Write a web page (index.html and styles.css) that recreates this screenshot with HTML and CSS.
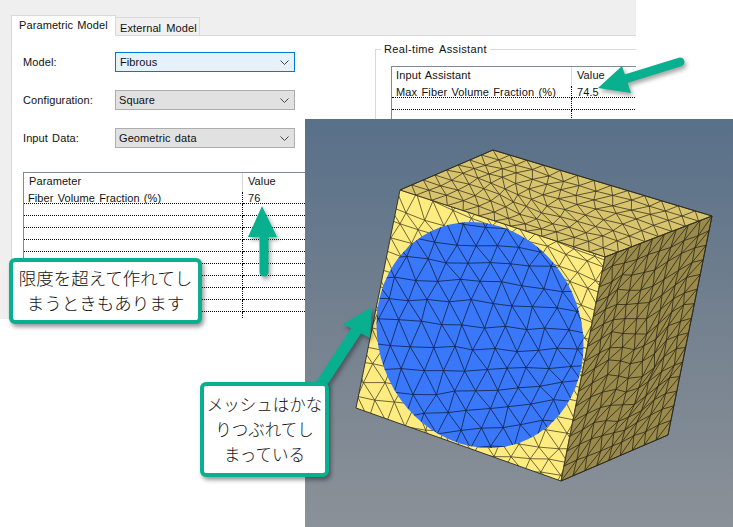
FILE: index.html
```html
<!DOCTYPE html>
<html lang="ja">
<head>
<meta charset="utf-8">
<title>Parametric Model</title>
<link rel="stylesheet" href="styles.css">
</head>
<body>
<main class="stage">
  <section class="dialog">
    <nav class="tabs">
      <div class="tab tab-active">Parametric Model</div>
      <div class="tab">External Model</div>
    </nav>
    <div class="panel">
      <div class="col-left">
        <div class="form-row">
          <span class="label">Model:</span>
          <div class="select select-focus"><span>Fibrous</span><svg class="chev" viewBox="0 0 9 5"><path d="M.5.5 4.5 4.5 8.500.5"/></svg></div>
        </div>
        <div class="form-row">
          <span class="label">Configuration:</span>
          <div class="select"><span>Square</span><svg class="chev" viewBox="0 0 9 5"><path d="M.5.5 4.5 4.5 8.500.5"/></svg></div>
        </div>
        <div class="form-row">
          <span class="label">Input Data:</span>
          <div class="select"><span>Geometric data</span><svg class="chev" viewBox="0 0 9 5"><path d="M.5.5 4.5 4.5 8.500.5"/></svg></div>
        </div>
        <table class="grid grid-param">
          <tr class="head"><th class="c1">Parameter</th><th class="c2">Value</th></tr>
          <tr><td class="c1">Fiber Volume Fraction (%)</td><td class="c2">76</td></tr>
          <tr><td></td><td></td></tr>
          <tr><td></td><td></td></tr>
          <tr><td></td><td></td></tr>
          <tr><td></td><td></td></tr>
          <tr><td></td><td></td></tr>
          <tr><td></td><td></td></tr>
          <tr><td></td><td></td></tr>
          <tr><td></td><td></td></tr>
          <tr><td></td><td></td></tr>
          <tr class="tail"><td></td><td></td></tr>
        </table>
      </div>
      <div class="col-right">
        <fieldset class="group">
          <legend>Real-time Assistant</legend>
          <table class="grid grid-assist">
            <tr class="head"><th class="c1">Input Assistant</th><th class="c2">Value</th></tr>
            <tr><td class="c1">Max Fiber Volume Fraction (%)</td><td class="c2">74.5</td></tr>
            <tr><td></td><td></td></tr>
            <tr><td></td><td></td></tr>
          </table>
        </fieldset>
      </div>
    </div>
  </section>

  <div class="viewer">
    <svg id="mesh" class="mesh" viewBox="305 119 428 408" xmlns="http://www.w3.org/2000/svg"></svg>
  </div>

  <svg class="arrows" viewBox="0 0 733 527" xmlns="http://www.w3.org/2000/svg">
    <g class="arrow">
      <path class="shaft" d="M680 62 625 79"/>
      <path class="head" d="M598 88 622 66 631 93Z"/>
    </g>
    <g class="arrow">
      <path class="shaft" d="M264 235V272"/>
      <path class="head" d="M262 206 248 237H277Z"/>
    </g>
    <g class="arrow">
      <path class="shaft-wide" d="M358 328 320 386"/>
      <path class="head" d="M372 307 343 324 370 338Z"/>
    </g>
  </svg>

  <div class="callout callout-limit">限度を超えて作れてし<br>まうときもあります</div>
  <div class="callout callout-mesh">メッシュはかな<br>りつぶれてし<br>まっている</div>
</main>
<script src="mesh.js"></script>
</body>
</html>
```
FILE: styles.css
```css
* { box-sizing: border-box; }
html, body { margin: 0; padding: 0; background: #fff; }
body { font-family: "Liberation Sans", "Noto Sans CJK JP", sans-serif; font-size: 11px; color: #111; word-spacing: 1px; letter-spacing: .1px; }

.stage { position: relative; width: 733px; height: 527px; overflow: hidden; background: #fff; }

.dialog { width: 636px; height: 319px; background: #efefef; padding-left: 11px; overflow: hidden; display: flex; flex-direction: column; }

.tabs { display: flex; align-items: flex-end; height: 36px; padding-top: 15px; }
.tab { height: 19px; padding: 3px 4px 0 4px; border: 1px solid #d9d9d9; border-bottom: 0; border-left: 0; background: #f0f0f0; line-height: 14px; white-space: nowrap; }
.tab-active { width: 105px; height: 21px; padding: 2px 0 0 7px; background: #fff; border-left: 1px solid #d9d9d9; position: relative; }
.tabs .tab:last-child { width: 84px; padding-left: 4px; word-spacing: 2px; }

.panel { flex: 1; display: flex; background: #fff; border-left: 1px solid #d9d9d9; border-top: 1px solid #d9d9d9; margin-top: -1px; }

.col-left { width: 352px; flex: none; padding: 16px 0 0 11px; display: flex; flex-direction: column; gap: 18px; }
.col-right { flex: 1; min-width: 0; padding: 6px 0 0 11px; }

.form-row { display: flex; align-items: center; height: 20px; }
.label { width: 92px; flex: none; }

.select { width: 180px; height: 20px; flex: none; display: flex; align-items: center; justify-content: space-between; padding: 0 5px 0 3px; background: #e1e1e1; border: 1px solid #adadad; }
.select-focus { background: #e5f1fb; border-color: #0078d7; padding-left: 4px; }
.chev { width: 9px; height: 5px; fill: none; stroke: #444; stroke-width: 1; }

.grid { border-collapse: separate; border-spacing: 0; table-layout: fixed; border-top: 1px solid #7f8a96; border-left: 1px solid #7f8a96; }
.grid th, .grid td { padding: 1px 0 0 4px; height: 12px; font-weight: normal; text-align: left; border-bottom: 1px dotted #000; line-height: 10px; white-space: nowrap; }
.grid td:first-child, .grid th:first-child { border-right: 1px dotted #000; }
.grid .c2 { padding-left: 5px; }
.grid .head th { height: 19px; padding-top: 0; line-height: 16px; border-bottom: 0; border-right-color: #d9d9d9; border-right-style: solid; vertical-align: top; }
.grid .tail td { height: 8px; border-bottom: 0; }
.grid-param { width: 300px; margin-top: 6px; }
.grid-param .c1 { width: 219px; }
.grid-param .head .c1 { padding-left: 5px; }
.grid-assist { width: 300px; margin: 0 0 0 15px; }
.grid-assist .c1 { width: 180px; letter-spacing: .15px; }

.group { margin: 0; padding: 10px 0 0 0; border: 1px solid #d9d9d9; border-right: 0; border-bottom: 0; min-width: 0; height: 300px; overflow: hidden; }
.group legend { margin-left: 5px; padding: 0 3px; line-height: 14px; word-spacing: 2px; letter-spacing: .35px; }

.viewer { position: absolute; left: 305px; top: 119px; width: 428px; height: 408px; background: linear-gradient(180deg, #587089 0%, #74818f 50%, #8b9198 100%); }
.mesh { display: block; width: 428px; height: 408px; }

.arrows { position: absolute; left: 0; top: 0; width: 733px; height: 527px; pointer-events: none; }
.arrow { filter: drop-shadow(2px 3px 2px rgba(0, 0, 0, .35)); }
.head { fill: #08b090; }
.shaft { fill: none; stroke: #08b090; stroke-width: 9; stroke-linecap: round; }
.shaft-wide { fill: none; stroke: #08b090; stroke-width: 11; }

.callout { position: absolute; background: #fff; border: 4px solid #08b090; border-radius: 6px; box-shadow: 2px 3px 4px rgba(0, 0, 0, .4); font-family: "Noto Sans CJK JP", sans-serif; font-weight: 300; line-height: 25px; letter-spacing: 0; text-align: center; color: #111; white-space: nowrap; display: flex; align-items: center; justify-content: center; }
.callout-limit { left: 9px; top: 258px; width: 193px; height: 66px; padding-bottom: 3px; font-size: 17.500px; }
.callout-mesh { left: 200px; top: 382px; width: 129px; height: 95px; font-size: 16.500px; }
```
FILE: mesh.js
```js
(function () {
  var NS = "http://www.w3.org/2000/svg";
  var svg = document.getElementById("mesh");
  var DISC = "matrix(103.5 10 0 112.5 480 335)";

  function el(name, attrs, parent) {
    var e = document.createElementNS(NS, name);
    for (var k in attrs) e.setAttribute(k, attrs[k]);
    (parent || svg).appendChild(e);
    return e;
  }
  function rnd(i, j, k) {
    var s = Math.sin(i * 12.9898 + j * 78.233 + k * 37.719) * 43758.5453;
    return s - Math.floor(s) - 0.5;
  }
  function pts(list) {
    return list.map(function (p) { return p[0] + "," + p[1]; }).join(" ");
  }
  function bilinear(a, b, c, d, u, v) {
    var x = (1 - v) * ((1 - u) * a[0] + u * b[0]) + v * ((1 - u) * d[0] + u * c[0]);
    var y = (1 - v) * ((1 - u) * a[1] + u * b[1]) + v * ((1 - u) * d[1] + u * c[1]);
    return [x, y];
  }
  function segs(list, stroke, width, parent) {
    var d = list.map(function (s) {
      return "M" + s[0][0].toFixed(1) + " " + s[0][1].toFixed(1) + "L" + s[1][0].toFixed(1) + " " + s[1][1].toFixed(1);
    }).join("");
    el("path", { d: d, fill: "none", stroke: stroke, "stroke-width": width }, parent);
  }

  /* Faces of the cube, in page coordinates */
  var L = [400, 190], T = [493, 150], RT = [712, 216], F = [605, 257];
  var BL = [356, 408], B = [561, 481], RB = [668, 435];

  var defs = el("defs", {});
  var clipFront = el("clipPath", { id: "clip-front" }, defs);
  el("polygon", { points: pts([L, F, B, BL]) }, clipFront);
  var clipBlue = el("clipPath", { id: "clip-blue" }, defs);
  el("circle", { cx: 0, cy: 0, r: 1, transform: DISC }, clipBlue);

  el("polygon", { points: pts([L, T, RT, F]), fill: "#d8c46c" });
  el("polygon", { points: pts([F, RT, RB, B]), fill: "#9a8b4c" });
  el("polygon", { points: pts([L, F, B, BL]), fill: "#ffec80" });

  /* Structured quad mesh with diagonals and a slight warp for the shaded faces */
  function quadMesh(a, b, c, d, nu, nv, seed, amp, stroke, width) {
    var grid = [], i, j, list = [];
    for (i = 0; i <= nu; i++) {
      grid[i] = [];
      for (j = 0; j <= nv; j++) {
        var u = i / nu, v = j / nv;
        var inner = i > 0 && i < nu && j > 0 && j < nv;
        var w = Math.sin(u * Math.PI) * Math.sin(v * Math.PI);
        var p = bilinear(a, b, c, d, u + w * 0.05 * Math.sin(v * 6 + seed), v + w * 0.05 * Math.sin(u * 7 + seed));
        if (inner) { p[0] += rnd(i, j, seed) * amp; p[1] += rnd(j, i, seed + 1) * amp; }
        grid[i][j] = p;
      }
    }
    for (i = 0; i <= nu; i++) for (j = 0; j <= nv; j++) {
      if (i < nu) list.push([grid[i][j], grid[i + 1][j]]);
      if (j < nv) list.push([grid[i][j], grid[i][j + 1]]);
      if (i < nu && j < nv) list.push([grid[i + 1][j], grid[i][j + 1]]);
    }
    segs(list, stroke, width);
  }
  quadMesh(L, F, RT, T, 13, 8, 1, 2, "#3b3522", 0.8);
  quadMesh(F, RT, RB, B, 9, 15, 4, 3, "#2b2716", 0.8);

  /* Triangular lattice clipped to a region; rows bow toward the centre */
  function lattice(clip, x0, y0, dx, dy, tilt, amp, seed, stroke, width) {
    var g = el("g", { "clip-path": "url(#" + clip + ")" });
    var nodes = {}, list = [], i, j;
    function node(i, j) {
      var key = i + ":" + j;
      if (!nodes[key]) {
        var wave = Math.sin(j * dx / 70 + i * 0.9) * 3;
        nodes[key] = [
          x0 + (j + (i & 1) / 2) * dx + i * 1.500 + rnd(i, j, seed) * amp,
          y0 + i * dy + j * dx * (tilt - i * 0.022) + wave + rnd(j, i, seed + 2) * amp
        ];
      }
      return nodes[key];
    }
    for (i = -14; i <= 14; i++) for (j = -14; j <= 14; j++) {
      list.push([node(i, j), node(i, j + 1)]);
      var odd = i & 1;
      list.push([node(i, j), node(i + 1, j - 1 + odd)]);
      list.push([node(i, j), node(i + 1, j + odd)]);
    }
    segs(list, stroke, width, g);
  }
  lattice("clip-front", 470, 300, 19, 17, 0.3, 3, 7, "#4a4526", 0.8);

  /* The disc sits over the yellow mesh and carries its own mesh */
  el("circle", { cx: 0, cy: 0, r: 1, transform: DISC, fill: "#3a78fb" });
  lattice("clip-blue", 483, 326, 21, 20.500, 0.03, 4.500, 11, "#14264f", 0.85);

  /* Silhouette */
  el("polygon", { points: pts([L, T, RT, RB, B, BL]), fill: "none", stroke: "#2a2a20", "stroke-width": 0.9 });
  el("path", { d: "M" + L + "L" + F + "L" + B + "M" + F + "L" + RT, fill: "none", stroke: "#3a3520", "stroke-width": 0.6 });
})();
```
